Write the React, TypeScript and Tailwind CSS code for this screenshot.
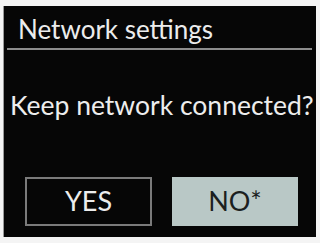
export default function App() {
  return (
    <div className="w-[320px] h-[243px] bg-[#f4f4f4] pt-[6px] pb-[6px] pl-[3px] pr-[4px]" style={{ fontFamily: 'Lato, sans-serif' }}>
      <div className="h-full bg-[#060606] border-l border-[#9a9a9a] flex flex-col">
        <div className="pl-[14px] pt-[9px] h-[42px] text-[26px] leading-[28px] text-[#ececec]">
          Network settings
        </div>
        <div className="ml-[3px] mr-[4px] h-[2px] bg-[#8c8c8c]" />
        <div className="mt-[40px] pl-[6px] text-[26.5px] leading-[30px] text-[#ededed] whitespace-nowrap">
          Keep network connected?
        </div>
        <div className="mt-[57px] pl-[21px] flex gap-[20px]">
          <div className="w-[127px] h-[49px] border-2 border-[#7a7a7a] flex items-center justify-center text-[27px] text-[#ececec]">
            YES
          </div>
          <div className="w-[126px] h-[49px] bg-[#b9c8c6] flex items-center justify-center text-[27px] text-[#1c1f1f]">
            NO*
          </div>
        </div>
      </div>
    </div>
  );
}
